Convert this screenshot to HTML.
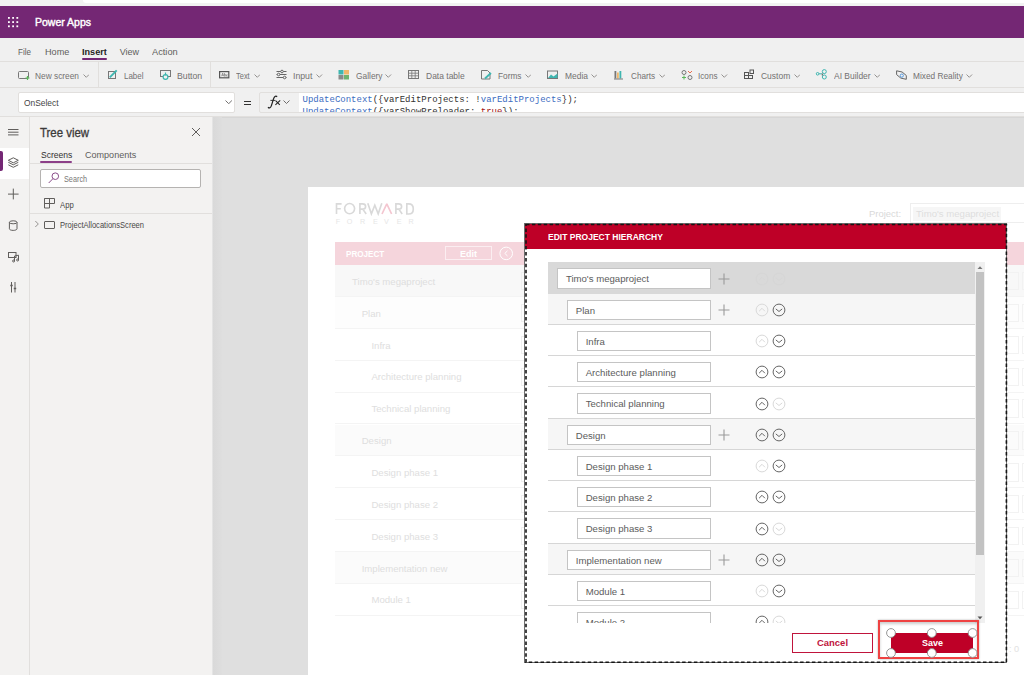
<!DOCTYPE html>
<html><head><meta charset="utf-8">
<style>
*{box-sizing:border-box;margin:0;padding:0}
html,body{width:1024px;height:675px;overflow:hidden;background:#fff;font-family:"Liberation Sans",sans-serif}
.a{position:absolute}
.t{position:absolute;white-space:pre;line-height:normal}

</style></head><body>
<div class=a style="left:0;top:0;width:1024px;height:6.3px;background:#f2f2f2"></div>
<div class=a style="left:83px;top:0;width:941px;height:3.3px;background:#fff;border-radius:0 0 0 3px"></div>
<div class=a style="left:0;top:6px;width:1024px;height:32px;background:#742774"></div>
<svg class=a style="left:8px;top:16.5px" width="11" height="11" viewBox="0 0 11 11" fill="#fff"><rect x="0" y="0" width="1.8" height="1.8"/><rect x="0" y="4.2" width="1.8" height="1.8"/><rect x="0" y="8.4" width="1.8" height="1.8"/><rect x="4.2" y="0" width="1.8" height="1.8"/><rect x="4.2" y="4.2" width="1.8" height="1.8"/><rect x="4.2" y="8.4" width="1.8" height="1.8"/><rect x="8.4" y="0" width="1.8" height="1.8"/><rect x="8.4" y="4.2" width="1.8" height="1.8"/><rect x="8.4" y="8.4" width="1.8" height="1.8"/></svg>
<div class=t style="left:34.5px;top:17.0px;font-size:10.3px;color:#fff;transform:scaleX(1.019);transform-origin:0 0;-webkit-text-stroke:0.4px #fff;">Power Apps</div>
<div class=a style="left:0;top:38px;width:1024px;height:24px;background:#f0f0f0;border-bottom:1px solid #e1dfdd"></div>
<div class=t style="left:18.0px;top:46.7px;font-size:9px;color:#605e5c;transform:scaleX(0.896);transform-origin:0 0;">File</div>
<div class=t style="left:44.5px;top:46.7px;font-size:9px;color:#605e5c;transform:scaleX(1.012);transform-origin:0 0;">Home</div>
<div class=t style="left:119.7px;top:46.7px;font-size:9px;color:#605e5c;">View</div>
<div class=t style="left:152.0px;top:46.7px;font-size:9px;color:#605e5c;transform:scaleX(1.027);transform-origin:0 0;">Action</div>
<div class=t style="left:82.0px;top:46.7px;font-size:9px;color:#252423;font-weight:bold;transform:scaleX(1.012);transform-origin:0 0;">Insert</div>
<div class=a style="left:82px;top:58px;width:25px;height:2px;background:#742774;border-radius:1px"></div>
<div class=a style="left:0;top:62px;width:1024px;height:26px;background:#f0f0f0;border-bottom:1px solid #e1dfdd"></div>
<div class=a style="left:97.5px;top:62px;width:1px;height:25px;background:#e1dfdd"></div>
<div class=a style="left:210px;top:62px;width:1px;height:25px;background:#e1dfdd"></div>
<div class=t style="left:35.4px;top:69.6px;font-size:9.8px;color:#737170;transform:scaleX(0.850);transform-origin:0 0;">New screen</div>
<svg class=a style="left:82.7px;top:74.1px" width="6.6" height="3.8"><polyline points="0.5,0.5 3.3,3.3 6.1,0.5" fill="none" stroke="#8a8886" stroke-width="0.9"/></svg>
<div class=t style="left:123.7px;top:69.6px;font-size:9.8px;color:#737170;transform:scaleX(0.813);transform-origin:0 0;">Label</div>
<div class=t style="left:176.6px;top:69.6px;font-size:9.8px;color:#737170;transform:scaleX(0.890);transform-origin:0 0;">Button</div>
<div class=t style="left:236.3px;top:69.6px;font-size:9.8px;color:#737170;transform:scaleX(0.762);transform-origin:0 0;">Text</div>
<svg class=a style="left:253.7px;top:74.1px" width="6.6" height="3.8"><polyline points="0.5,0.5 3.3,3.3 6.1,0.5" fill="none" stroke="#8a8886" stroke-width="0.9"/></svg>
<div class=t style="left:293.4px;top:69.6px;font-size:9.8px;color:#737170;transform:scaleX(0.890);transform-origin:0 0;">Input</div>
<svg class=a style="left:316.2px;top:74.1px" width="6.6" height="3.8"><polyline points="0.5,0.5 3.3,3.3 6.1,0.5" fill="none" stroke="#8a8886" stroke-width="0.9"/></svg>
<div class=t style="left:355.8px;top:69.6px;font-size:9.8px;color:#737170;transform:scaleX(0.854);transform-origin:0 0;">Gallery</div>
<svg class=a style="left:385.3px;top:74.1px" width="6.6" height="3.8"><polyline points="0.5,0.5 3.3,3.3 6.1,0.5" fill="none" stroke="#8a8886" stroke-width="0.9"/></svg>
<div class=t style="left:425.7px;top:69.6px;font-size:9.8px;color:#737170;transform:scaleX(0.866);transform-origin:0 0;">Data table</div>
<div class=t style="left:497.6px;top:69.6px;font-size:9.8px;color:#737170;transform:scaleX(0.843);transform-origin:0 0;">Forms</div>
<svg class=a style="left:524.7px;top:74.1px" width="6.6" height="3.8"><polyline points="0.5,0.5 3.3,3.3 6.1,0.5" fill="none" stroke="#8a8886" stroke-width="0.9"/></svg>
<div class=t style="left:564.6px;top:69.6px;font-size:9.8px;color:#737170;transform:scaleX(0.862);transform-origin:0 0;">Media</div>
<svg class=a style="left:590.7px;top:74.1px" width="6.6" height="3.8"><polyline points="0.5,0.5 3.3,3.3 6.1,0.5" fill="none" stroke="#8a8886" stroke-width="0.9"/></svg>
<div class=t style="left:631.0px;top:69.6px;font-size:9.8px;color:#737170;transform:scaleX(0.832);transform-origin:0 0;">Charts</div>
<svg class=a style="left:658.9px;top:74.1px" width="6.6" height="3.8"><polyline points="0.5,0.5 3.3,3.3 6.1,0.5" fill="none" stroke="#8a8886" stroke-width="0.9"/></svg>
<div class=t style="left:698.4px;top:69.6px;font-size:9.8px;color:#737170;transform:scaleX(0.833);transform-origin:0 0;">Icons</div>
<svg class=a style="left:721.0px;top:74.1px" width="6.6" height="3.8"><polyline points="0.5,0.5 3.3,3.3 6.1,0.5" fill="none" stroke="#8a8886" stroke-width="0.9"/></svg>
<div class=t style="left:761.0px;top:69.6px;font-size:9.8px;color:#737170;transform:scaleX(0.865);transform-origin:0 0;">Custom</div>
<svg class=a style="left:793.5px;top:74.1px" width="6.6" height="3.8"><polyline points="0.5,0.5 3.3,3.3 6.1,0.5" fill="none" stroke="#8a8886" stroke-width="0.9"/></svg>
<div class=t style="left:833.6px;top:69.6px;font-size:9.8px;color:#737170;transform:scaleX(0.861);transform-origin:0 0;">AI Builder</div>
<svg class=a style="left:873.5px;top:74.1px" width="6.6" height="3.8"><polyline points="0.5,0.5 3.3,3.3 6.1,0.5" fill="none" stroke="#8a8886" stroke-width="0.9"/></svg>
<div class=t style="left:913.3px;top:69.6px;font-size:9.8px;color:#737170;transform:scaleX(0.847);transform-origin:0 0;">Mixed Reality</div>
<svg class=a style="left:966.2px;top:74.1px" width="6.6" height="3.8"><polyline points="0.5,0.5 3.3,3.3 6.1,0.5" fill="none" stroke="#8a8886" stroke-width="0.9"/></svg>
<svg class=a style="left:0;top:62px" width="1024" height="26" fill="none" stroke-width="1">
<g transform="translate(0,-62)">
 <rect x="18.5" y="71.5" width="10" height="7" rx="1" stroke="#777"/>
 <path d="M27.5 76v4M25.5 78h4" stroke="#5cb85c" stroke-width="1.2"/>
 <rect x="108.5" y="71.5" width="7" height="7" stroke="#777"/>
 <path d="M109.8 77.4l6.9-7.1" stroke="#3fb6b0" stroke-width="1.9"/>
 <rect x="160.5" y="70.5" width="10" height="6" stroke="#777"/>
 <circle cx="165.5" cy="77" r="2.4" stroke="#3fb6b0" stroke-width="1.2" fill="#f0f0f0"/>
 <path d="M165.5 72.5v3" stroke="#3fb6b0" stroke-width="1.2"/>
 <rect x="219.6" y="71.6" width="9.2" height="6.2" stroke="#555" stroke-width="1.2"/>
 <path d="M221.6 76.2l1-3 1 3M222 75.2h1.2M224.4 73v3.2c1.2 0 1.6-0.3 1.6-0.9s-0.4-0.9-1.6-0.9M227.6 74.8c-0.8-0.3-1.4 0-1.4 0.7s0.6 1 1.4 0.7" stroke="#666" stroke-width="0.6"/>
 <path d="M276.5 71.5h10M276.5 74.5h10M276.5 77.5h10" stroke="#666"/>
 <circle cx="282" cy="71.5" r="1.3" fill="#f0f0f0" stroke="#666"/><circle cx="278.6" cy="74.5" r="1.3" fill="#f0f0f0" stroke="#666"/><circle cx="284.6" cy="77.5" r="1.3" fill="#f0f0f0" stroke="#666"/>
 <rect x="338.5" y="70" width="5" height="4.5" fill="#3fb6b0" stroke="none"/><rect x="344" y="70" width="5" height="4.5" fill="#f2b86b" stroke="none"/>
 <rect x="338.5" y="75" width="5" height="4.5" fill="#8a8a8a" stroke="none"/><rect x="344" y="75" width="5" height="4.5" fill="#6fb36f" stroke="none"/>
 <rect x="408.5" y="70.5" width="10" height="8" stroke="#777"/>
 <path d="M408.5 73.2h10M408.5 75.8h10M411.8 70.5v8M415.2 70.5v8" stroke="#777" stroke-width="0.8"/>
 <path d="M481.5 70.5h6l2.5 2.5v6h-8.5z" stroke="#777"/>
 <path d="M485 78.5l6-5.5" stroke="#3fb6b0" stroke-width="1.8"/>
 <rect x="547.5" y="71" width="10" height="7.5" stroke="#777"/>
 <path d="M548 78l3-3.5 2.5 2 4-3v4.5h-9.5z" fill="#3fb6b0" stroke="none"/>
 <rect x="614.5" y="71" width="1.8" height="7.5" fill="#777" stroke="none"/>
 <rect x="617" y="72.5" width="1.8" height="6" fill="#f2b86b" stroke="none"/>
 <rect x="619.5" y="71" width="1.8" height="7.5" fill="#3fb6b0" stroke="none"/>
 <path d="M614 79h9" stroke="#777"/>
 <circle cx="684" cy="72.5" r="2" stroke="#777"/><path d="M688 71l2 2 2-2" stroke="#e96b4b"/>
 <path d="M682 77.5h4M684 75.5v4" stroke="#5cb85c"/><circle cx="690" cy="77.5" r="2" stroke="#777"/>
 <rect x="744.5" y="72.5" width="4" height="3" stroke="#555"/><rect x="744.5" y="75.5" width="4" height="3" stroke="#555"/><rect x="748.5" y="75.5" width="4" height="3" stroke="#555"/>
 <rect x="750" y="70" width="3.5" height="3.5" stroke="#555"/>
 <path d="M818.4 73.8h3.5" stroke="#3fb6b0"/>
 <circle cx="817.6" cy="73.8" r="1.3" stroke="#3fb6b0" fill="#f0f0f0"/><circle cx="824.3" cy="71.6" r="2" stroke="#3fb6b0" fill="#f0f0f0"/><circle cx="824.3" cy="77" r="2" stroke="#3fb6b0" fill="#f0f0f0"/><path d="M822.3 73.5v2" stroke="#555"/>
 <path d="M896.6 70.8l5.5 1.2 4.2 3.5v3.8l-5.5-1.2-4.2-3.5z" stroke="#666"/><circle cx="901.8" cy="75.6" r="1.6" stroke="#4a90d9" stroke-width="0.9"/>
</g></svg>
<div class=a style="left:0;top:88px;width:1024px;height:29px;background:#f0f0f0;border-bottom:1px solid #e1dfdd"></div>
<div class=a style="left:18px;top:92px;width:216.5px;height:20.5px;background:#fff;border:1px solid #e1dfdd;border-radius:2px"></div>
<div class=t style="left:23.5px;top:97.7px;font-size:9px;color:#454545;transform:scaleX(0.932);transform-origin:0 0;">OnSelect</div>
<svg class=a style="left:224.9px;top:100.2px" width="7.4" height="4.2"><polyline points="0.5,0.5 3.7,3.7 6.9,0.5" fill="none" stroke="#605e5c" stroke-width="0.9"/></svg>
<div class=a style="left:244px;top:100.5px;width:7px;height:1.3px;background:#323130"></div>
<div class=a style="left:244px;top:103.8px;width:7px;height:1.3px;background:#323130"></div>
<div class=a style="left:259px;top:92px;width:40.5px;height:20.5px;background:#f0f0f0;border:1px solid #e1dfdd;border-radius:2px 0 0 2px"></div>
<svg class=a style="left:0;top:0" width="1024" height="130" fill="none" stroke="#222"><path d="M268 107.2C269.3 108.6 270.7 107.8 271.4 105.6L273.6 98.6C274.3 96.6 275.4 95.6 277.2 96.6" stroke-width="1.25"/><path d="M270.4 100.4H275.3" stroke-width="0.9"/><path d="M275.6 100.6L279.8 104.8M280.2 100.4L275.4 104.9" stroke-width="1.05"/></svg>
<svg class=a style="left:283.0px;top:100.3px" width="7.0" height="4.0"><polyline points="0.5,0.5 3.5,3.5 6.5,0.5" fill="none" stroke="#605e5c" stroke-width="0.9"/></svg>
<div class=a style="left:299px;top:92px;width:725px;height:20.5px;background:#fff;border-top:1px solid #e1dfdd;border-bottom:1px solid #e1dfdd;overflow:hidden"><div style="position:absolute;left:3.5px;top:1.2px;font-family:'Liberation Mono';font-size:9px;line-height:12.2px;white-space:pre;color:#323130"><span style="color:#3b6cc1">UpdateContext</span>({varEditProjects: !<span style="color:#3b6cc1">varEditProjects</span>});
<span style="color:#3b6cc1">UpdateContext</span>({varShowPreloader: <span style="color:#a31515">true</span>});</div></div>
<div class=a style="left:0;top:117px;width:30px;height:558px;background:#f3f2f1;border-right:1px solid #e1dfdd"></div>
<div class=a style="left:0;top:148px;width:29px;height:30.5px;background:#fff"></div>
<div class=a style="left:0;top:150.5px;width:2.7px;height:20.3px;background:#742774;border-radius:0 2px 2px 0"></div>
<svg class=a style="left:0;top:117px" width="30" height="200" fill="none" stroke="#605e5c" stroke-width="1">
<g transform="translate(0,-117)">
<path d="M8 129.5h10.5M8 132.2h10.5M8 134.9h10.5"/>
<path d="M13.3 157.8l5 2.5-5 2.5-5-2.5z"/><path d="M8.3 162.3l5 2.5 5-2.5M8.3 164.8l5 2.5 5-2.5"/>
<path d="M13.3 188.6v10.8M8 194.1h10.6" stroke-width="1"/>
<ellipse cx="13.2" cy="222.3" rx="3.8" ry="1.5"/><path d="M9.4 222.3v6.5c0 0.9 1.7 1.6 3.8 1.6s3.8-0.7 3.8-1.6v-6.5"/>
<rect x="8.5" y="252.5" width="7.5" height="5"/><path d="M14.5 261v-5l4 -0.8v4.8"/><circle cx="13.6" cy="261" r="1"/><circle cx="17.6" cy="260" r="1"/>
<path d="M11.5 282v10.5M15 282v10.5"/><path d="M10.3 285.5h2.4M13.8 288.5h2.4" stroke-width="1.4"/>
</g></svg>
<div class=a style="left:30px;top:117px;width:182px;height:558px;background:#f3f2f1"></div>
<div class=t style="left:40.3px;top:125.7px;font-size:12px;color:#3b3a39;transform:scaleX(0.950);transform-origin:0 0;-webkit-text-stroke:0.3px #3b3a39;">Tree view</div>
<svg class=a style="left:191px;top:126.5px" width="10" height="10"><path d="M1 1l8 8M9 1l-8 8" stroke="#605e5c" stroke-width="1"/></svg>
<div class=t style="left:40.5px;top:149.1px;font-size:9.8px;color:#323130;transform:scaleX(0.871);transform-origin:0 0;">Screens</div>
<div class=t style="left:84.5px;top:149.1px;font-size:9.8px;color:#605e5c;transform:scaleX(0.923);transform-origin:0 0;">Components</div>
<div class=a style="left:30px;top:163px;width:182px;height:1px;background:#e1dfdd"></div>
<div class=a style="left:40px;top:161px;width:32.3px;height:2px;background:#8c3f88;border-radius:1px"></div>
<div class=a style="left:39.7px;top:168.5px;width:161.6px;height:19px;background:#fff;border:1px solid #b5b3b1;border-radius:2px"></div>
<svg class=a style="left:47px;top:171px" width="14" height="14" fill="none" stroke="#8a4d8a" stroke-width="1"><circle cx="8.3" cy="5.2" r="3.3"/><path d="M6 7.6l-4.3 4.4"/></svg>
<div class=t style="left:64.0px;top:174.3px;font-size:8.5px;color:#7a7876;transform:scaleX(0.858);transform-origin:0 0;">Search</div>
<svg class=a style="left:43px;top:197px" width="14" height="13" fill="none" stroke="#605e5c" stroke-width="1">
<path d="M1.5 1.5h10v5h-10zM1.5 1.5v9.5h5v-9.5"/></svg>
<div class=t style="left:59.9px;top:199.7px;font-size:8.3px;color:#484746;transform:scaleX(0.928);transform-origin:0 0;">App</div>
<div class=a style="left:30px;top:213px;width:182px;height:1px;background:#e1dfdd"></div>
<svg class=a style="left:34px;top:220px" width="6" height="8"><path d="M1.3 1l3 3-3 3" fill="none" stroke="#8a8886" stroke-width="0.9"/></svg>
<div class=a style="left:44px;top:220.7px;width:11px;height:8px;border:1px solid #605e5c;border-radius:1px"></div>
<div class=t style="left:59.9px;top:221.1px;font-size:8.2px;color:#484746;transform:scaleX(0.923);transform-origin:0 0;">ProjectAllocationsScreen</div>
<div class=a style="left:212px;top:117px;width:812px;height:558px;background:#dfdfdf;border-top:1px solid #d6d6d6"></div>
<div class=a style="left:212px;top:117px;width:10px;height:558px;background:linear-gradient(90deg,#e4e4e4 0,#e4e4e4 1px,#d9d9d9 1px,#dedede)"></div>
<div class=a style="left:308px;top:187px;width:716px;height:488px;background:#fff"></div>
<svg class=a style="left:0;top:0" width="1024" height="675" fill="none" stroke="#d9d9d9" stroke-width="1.65"><path d="M336.5 214V203.8H341.6M336.5 208.7H340.8"/><ellipse cx="349.6" cy="208.6" rx="5" ry="5.1"/><path d="M359.9 214V203.8H362.6C364.6 203.8 365.6 205 365.6 206.4C365.6 207.9 364.5 209.1 362.6 209.1H359.9M362.8 209.1L366.2 214"/><path d="M367.8 203.3L371.4 213.8L374.8 205.2L378.2 213.8L381.8 203.3"/><path d="M395.9 214V203.8H398.6C400.6 203.8 401.6 205 401.6 206.4C401.6 207.9 400.5 209.1 398.6 209.1H395.9M398.8 209.1L402.2 214"/><path d="M406.8 214V203.8H408.6C411.6 203.8 413.3 206 413.3 208.9C413.3 211.8 411.6 214 408.6 214Z"/><path d="M382 214L386.8 203.9L391.6 214" stroke="#f4c6d0" stroke-width="1.7" stroke-linejoin="bevel"/></svg>
<div class=t style="left:335.7px;top:217.3px;font-size:7.2px;color:#e6e6e6;">F</div>
<div class=t style="left:346.8px;top:217.3px;font-size:7.2px;color:#e6e6e6;">O</div>
<div class=t style="left:360.0px;top:217.3px;font-size:7.2px;color:#e6e6e6;">R</div>
<div class=t style="left:373.0px;top:217.3px;font-size:7.2px;color:#e6e6e6;">E</div>
<div class=t style="left:384.0px;top:217.3px;font-size:7.2px;color:#e6e6e6;">V</div>
<div class=t style="left:396.8px;top:217.3px;font-size:7.2px;color:#e6e6e6;">E</div>
<div class=t style="left:408.6px;top:217.3px;font-size:7.2px;color:#e6e6e6;">R</div>
<div class=t style="left:868.8px;top:207.6px;font-size:9.6px;color:#d9d9d9;transform:scaleX(0.984);transform-origin:0 0;">Project:</div>
<div class=a style="left:910px;top:203.2px;width:120px;height:19.6px;border:1px solid #eeeeee"></div>
<div class=a style="left:913px;top:207px;width:88px;height:13.5px;background:#f6f6f6"></div>
<div class=t style="left:916.0px;top:207.8px;font-size:9.6px;color:#dedede;">Timo&#x27;s megaproject</div>
<div class=a style="left:334.8px;top:265.2px;width:700px;height:31.86px;background:#f8f8f8;border-bottom:1px solid #f4f4f4"></div>
<div class=t style="left:352.1px;top:275.8px;font-size:9.6px;color:#dedede;">Timo&#x27;s megaproject</div>
<div class=a style="left:520.7px;top:271.9px;width:30px;height:18.5px;border:1px solid #f0f0f0"></div>
<div class=a style="left:1007px;top:271.9px;width:11.5px;height:18.5px;border:1px solid #f2f2f2"></div>
<div class=a style="left:1022px;top:271.9px;width:11.5px;height:18.5px;border:1px solid #f2f2f2"></div>
<div class=a style="left:334.8px;top:297.1px;width:700px;height:31.86px;background:#fdfdfd;border-bottom:1px solid #f4f4f4"></div>
<div class=t style="left:361.7px;top:307.7px;font-size:9.6px;color:#dedede;">Plan</div>
<div class=a style="left:520.7px;top:303.8px;width:30px;height:18.5px;border:1px solid #f0f0f0"></div>
<div class=a style="left:1007px;top:303.8px;width:11.5px;height:18.5px;border:1px solid #f2f2f2"></div>
<div class=a style="left:1022px;top:303.8px;width:11.5px;height:18.5px;border:1px solid #f2f2f2"></div>
<div class=a style="left:334.8px;top:328.9px;width:700px;height:31.86px;background:#fff;border-bottom:1px solid #f4f4f4"></div>
<div class=t style="left:371.4px;top:339.5px;font-size:9.6px;color:#dedede;">Infra</div>
<div class=a style="left:520.7px;top:335.6px;width:30px;height:18.5px;border:1px solid #f0f0f0"></div>
<div class=a style="left:1007px;top:335.6px;width:11.5px;height:18.5px;border:1px solid #f2f2f2"></div>
<div class=a style="left:1022px;top:335.6px;width:11.5px;height:18.5px;border:1px solid #f2f2f2"></div>
<div class=a style="left:334.8px;top:360.8px;width:700px;height:31.86px;background:#fff;border-bottom:1px solid #f4f4f4"></div>
<div class=t style="left:371.4px;top:371.4px;font-size:9.6px;color:#dedede;">Architecture planning</div>
<div class=a style="left:520.7px;top:367.5px;width:30px;height:18.5px;border:1px solid #f0f0f0"></div>
<div class=a style="left:1007px;top:367.5px;width:11.5px;height:18.5px;border:1px solid #f2f2f2"></div>
<div class=a style="left:1022px;top:367.5px;width:11.5px;height:18.5px;border:1px solid #f2f2f2"></div>
<div class=a style="left:334.8px;top:392.6px;width:700px;height:31.86px;background:#fff;border-bottom:1px solid #f4f4f4"></div>
<div class=t style="left:371.4px;top:403.3px;font-size:9.6px;color:#dedede;">Technical planning</div>
<div class=a style="left:520.7px;top:399.3px;width:30px;height:18.5px;border:1px solid #f0f0f0"></div>
<div class=a style="left:1007px;top:399.3px;width:11.5px;height:18.5px;border:1px solid #f2f2f2"></div>
<div class=a style="left:1022px;top:399.3px;width:11.5px;height:18.5px;border:1px solid #f2f2f2"></div>
<div class=a style="left:334.8px;top:424.5px;width:700px;height:31.86px;background:#fbfbfb;border-bottom:1px solid #f4f4f4"></div>
<div class=t style="left:361.7px;top:435.1px;font-size:9.6px;color:#dedede;">Design</div>
<div class=a style="left:520.7px;top:431.2px;width:30px;height:18.5px;border:1px solid #f0f0f0"></div>
<div class=a style="left:1007px;top:431.2px;width:11.5px;height:18.5px;border:1px solid #f2f2f2"></div>
<div class=a style="left:1022px;top:431.2px;width:11.5px;height:18.5px;border:1px solid #f2f2f2"></div>
<div class=a style="left:334.8px;top:456.4px;width:700px;height:31.86px;background:#fff;border-bottom:1px solid #f4f4f4"></div>
<div class=t style="left:371.4px;top:467.0px;font-size:9.6px;color:#dedede;">Design phase 1</div>
<div class=a style="left:520.7px;top:463.1px;width:30px;height:18.5px;border:1px solid #f0f0f0"></div>
<div class=a style="left:1007px;top:463.1px;width:11.5px;height:18.5px;border:1px solid #f2f2f2"></div>
<div class=a style="left:1022px;top:463.1px;width:11.5px;height:18.5px;border:1px solid #f2f2f2"></div>
<div class=a style="left:334.8px;top:488.2px;width:700px;height:31.86px;background:#fff;border-bottom:1px solid #f4f4f4"></div>
<div class=t style="left:371.4px;top:498.8px;font-size:9.6px;color:#dedede;">Design phase 2</div>
<div class=a style="left:520.7px;top:494.9px;width:30px;height:18.5px;border:1px solid #f0f0f0"></div>
<div class=a style="left:1007px;top:494.9px;width:11.5px;height:18.5px;border:1px solid #f2f2f2"></div>
<div class=a style="left:1022px;top:494.9px;width:11.5px;height:18.5px;border:1px solid #f2f2f2"></div>
<div class=a style="left:334.8px;top:520.1px;width:700px;height:31.86px;background:#fff;border-bottom:1px solid #f4f4f4"></div>
<div class=t style="left:371.4px;top:530.7px;font-size:9.6px;color:#dedede;">Design phase 3</div>
<div class=a style="left:520.7px;top:526.8px;width:30px;height:18.5px;border:1px solid #f0f0f0"></div>
<div class=a style="left:1007px;top:526.8px;width:11.5px;height:18.5px;border:1px solid #f2f2f2"></div>
<div class=a style="left:1022px;top:526.8px;width:11.5px;height:18.5px;border:1px solid #f2f2f2"></div>
<div class=a style="left:334.8px;top:551.9px;width:700px;height:31.86px;background:#fbfbfb;border-bottom:1px solid #f4f4f4"></div>
<div class=t style="left:361.7px;top:562.6px;font-size:9.6px;color:#dedede;">Implementation new</div>
<div class=a style="left:520.7px;top:558.6px;width:30px;height:18.5px;border:1px solid #f0f0f0"></div>
<div class=a style="left:1007px;top:558.6px;width:11.5px;height:18.5px;border:1px solid #f2f2f2"></div>
<div class=a style="left:1022px;top:558.6px;width:11.5px;height:18.5px;border:1px solid #f2f2f2"></div>
<div class=a style="left:334.8px;top:583.8px;width:700px;height:31.86px;background:#fff;border-bottom:1px solid #f4f4f4"></div>
<div class=t style="left:371.4px;top:594.4px;font-size:9.6px;color:#dedede;">Module 1</div>
<div class=a style="left:520.7px;top:590.5px;width:30px;height:18.5px;border:1px solid #f0f0f0"></div>
<div class=a style="left:1007px;top:590.5px;width:11.5px;height:18.5px;border:1px solid #f2f2f2"></div>
<div class=a style="left:1022px;top:590.5px;width:11.5px;height:18.5px;border:1px solid #f2f2f2"></div>
<div class=a style="left:334.8px;top:242px;width:700px;height:23.3px;background:#f5d5dc"></div>
<div class=t style="left:346.1px;top:248.3px;font-size:9.8px;color:#fff;font-weight:bold;transform:scaleX(0.828);transform-origin:0 0;">PROJECT</div>
<div class=a style="left:444.9px;top:246.3px;width:46.8px;height:14.1px;border:1px solid #fbeef1"></div>
<div class=t style="left:460.2px;top:248.1px;font-size:9.8px;color:#fff;font-weight:bold;transform:scaleX(0.918);transform-origin:0 0;">Edit</div>
<svg class=a style="left:498px;top:245px" width="17" height="17" fill="none" stroke="#fff" stroke-width="1"><circle cx="8.2" cy="8.4" r="6.3"/><path d="M9.5 5.8l-2.6 2.6 2.6 2.6"/></svg>
<div class=t style="left:1009.0px;top:643.7px;font-size:9.2px;color:#e2e2e2;">: 0</div>
<div class=a style="left:525px;top:223px;width:482px;height:440px;background:#fff"></div>
<div class=a style="left:525px;top:223px;width:482px;height:25.5px;background:#be0027"></div>
<div class=t style="left:547.8px;top:232.1px;font-size:9px;color:#fff;font-weight:bold;transform:scaleX(0.946);transform-origin:0 0;">EDIT PROJECT HIERARCHY</div>
<div class=a style="left:548px;top:262.4px;width:427px;height:360.6px;overflow:hidden"><div class=a style="left:0;top:0.0px;width:427px;height:31.6px;background:#d9d9d9;"></div><div class=a style="left:9.3px;top:6.1px;width:153.9px;height:20.3px;background:#fff;border:1px solid #c4c4c4"></div><div class=t style="left:17.9px;top:11.0px;font-size:9.6px;color:#5c5c5c">Timo&#x27;s megaproject</div><svg class=a style="left:170px;top:10.6px" width="12" height="12"><path d="M6 0.5v11M0.5 6h11" stroke="#9a9a9a" stroke-width="1.1"/></svg><svg class=a style="left:205.8px;top:8.2px" width="16" height="16" fill="none" stroke="#d6d6d6" stroke-width="1"><g transform="translate(8,8)"><circle r="5.9"/><path d="M-2.9 1.2L0 -1.7L2.9 1.2"/></g></svg><svg class=a style="left:222.8px;top:8.2px" width="16" height="16" fill="none" stroke="#d6d6d6" stroke-width="1"><g transform="translate(8,8)"><circle r="5.9"/><path d="M-3.2 -1.1L0 1.5L3.2 -1.1"/></g></svg><div class=a style="left:0;top:31.2px;width:427px;height:31.2px;background:#f6f6f6;border-bottom:1px solid #d6d6d6;"></div><div class=a style="left:19.2px;top:37.4px;width:144.0px;height:20.3px;background:#fff;border:1px solid #c4c4c4"></div><div class=t style="left:27.8px;top:42.3px;font-size:9.6px;color:#5c5c5c">Plan</div><svg class=a style="left:170px;top:41.9px" width="12" height="12"><path d="M6 0.5v11M0.5 6h11" stroke="#9a9a9a" stroke-width="1.1"/></svg><svg class=a style="left:205.8px;top:39.5px" width="16" height="16" fill="none" stroke="#d9d9d9" stroke-width="1"><g transform="translate(8,8)"><circle r="5.9"/><path d="M-2.9 1.2L0 -1.7L2.9 1.2"/></g></svg><svg class=a style="left:222.8px;top:39.5px" width="16" height="16" fill="none" stroke="#666" stroke-width="1"><g transform="translate(8,8)"><circle r="5.9"/><path d="M-3.2 -1.1L0 1.5L3.2 -1.1"/></g></svg><div class=a style="left:0;top:62.5px;width:427px;height:31.2px;background:#fff;border-bottom:1px solid #d6d6d6;"></div><div class=a style="left:29.1px;top:68.6px;width:134.1px;height:20.3px;background:#fff;border:1px solid #c4c4c4"></div><div class=t style="left:37.7px;top:73.5px;font-size:9.6px;color:#5c5c5c">Infra</div><svg class=a style="left:205.8px;top:70.7px" width="16" height="16" fill="none" stroke="#d9d9d9" stroke-width="1"><g transform="translate(8,8)"><circle r="5.9"/><path d="M-2.9 1.2L0 -1.7L2.9 1.2"/></g></svg><svg class=a style="left:222.8px;top:70.7px" width="16" height="16" fill="none" stroke="#666" stroke-width="1"><g transform="translate(8,8)"><circle r="5.9"/><path d="M-3.2 -1.1L0 1.5L3.2 -1.1"/></g></svg><div class=a style="left:0;top:93.8px;width:427px;height:31.2px;background:#fff;border-bottom:1px solid #d6d6d6;"></div><div class=a style="left:29.1px;top:99.8px;width:134.1px;height:20.3px;background:#fff;border:1px solid #c4c4c4"></div><div class=t style="left:37.7px;top:104.8px;font-size:9.6px;color:#5c5c5c">Architecture planning</div><svg class=a style="left:205.8px;top:102.0px" width="16" height="16" fill="none" stroke="#666" stroke-width="1"><g transform="translate(8,8)"><circle r="5.9"/><path d="M-2.9 1.2L0 -1.7L2.9 1.2"/></g></svg><svg class=a style="left:222.8px;top:102.0px" width="16" height="16" fill="none" stroke="#666" stroke-width="1"><g transform="translate(8,8)"><circle r="5.9"/><path d="M-3.2 -1.1L0 1.5L3.2 -1.1"/></g></svg><div class=a style="left:0;top:125.0px;width:427px;height:31.2px;background:#fff;border-bottom:1px solid #d6d6d6;"></div><div class=a style="left:29.1px;top:131.1px;width:134.1px;height:20.3px;background:#fff;border:1px solid #c4c4c4"></div><div class=t style="left:37.7px;top:136.0px;font-size:9.6px;color:#5c5c5c">Technical planning</div><svg class=a style="left:205.8px;top:133.2px" width="16" height="16" fill="none" stroke="#666" stroke-width="1"><g transform="translate(8,8)"><circle r="5.9"/><path d="M-2.9 1.2L0 -1.7L2.9 1.2"/></g></svg><svg class=a style="left:222.8px;top:133.2px" width="16" height="16" fill="none" stroke="#d9d9d9" stroke-width="1"><g transform="translate(8,8)"><circle r="5.9"/><path d="M-3.2 -1.1L0 1.5L3.2 -1.1"/></g></svg><div class=a style="left:0;top:156.2px;width:427px;height:31.2px;background:#f6f6f6;border-bottom:1px solid #d6d6d6;"></div><div class=a style="left:19.2px;top:162.3px;width:144.0px;height:20.3px;background:#fff;border:1px solid #c4c4c4"></div><div class=t style="left:27.8px;top:167.3px;font-size:9.6px;color:#5c5c5c">Design</div><svg class=a style="left:170px;top:166.8px" width="12" height="12"><path d="M6 0.5v11M0.5 6h11" stroke="#9a9a9a" stroke-width="1.1"/></svg><svg class=a style="left:205.8px;top:164.4px" width="16" height="16" fill="none" stroke="#666" stroke-width="1"><g transform="translate(8,8)"><circle r="5.9"/><path d="M-2.9 1.2L0 -1.7L2.9 1.2"/></g></svg><svg class=a style="left:222.8px;top:164.4px" width="16" height="16" fill="none" stroke="#666" stroke-width="1"><g transform="translate(8,8)"><circle r="5.9"/><path d="M-3.2 -1.1L0 1.5L3.2 -1.1"/></g></svg><div class=a style="left:0;top:187.5px;width:427px;height:31.2px;background:#fff;border-bottom:1px solid #d6d6d6;"></div><div class=a style="left:29.1px;top:193.6px;width:134.1px;height:20.3px;background:#fff;border:1px solid #c4c4c4"></div><div class=t style="left:37.7px;top:198.5px;font-size:9.6px;color:#5c5c5c">Design phase 1</div><svg class=a style="left:205.8px;top:195.7px" width="16" height="16" fill="none" stroke="#d9d9d9" stroke-width="1"><g transform="translate(8,8)"><circle r="5.9"/><path d="M-2.9 1.2L0 -1.7L2.9 1.2"/></g></svg><svg class=a style="left:222.8px;top:195.7px" width="16" height="16" fill="none" stroke="#666" stroke-width="1"><g transform="translate(8,8)"><circle r="5.9"/><path d="M-3.2 -1.1L0 1.5L3.2 -1.1"/></g></svg><div class=a style="left:0;top:218.8px;width:427px;height:31.2px;background:#fff;border-bottom:1px solid #d6d6d6;"></div><div class=a style="left:29.1px;top:224.8px;width:134.1px;height:20.3px;background:#fff;border:1px solid #c4c4c4"></div><div class=t style="left:37.7px;top:229.8px;font-size:9.6px;color:#5c5c5c">Design phase 2</div><svg class=a style="left:205.8px;top:226.9px" width="16" height="16" fill="none" stroke="#666" stroke-width="1"><g transform="translate(8,8)"><circle r="5.9"/><path d="M-2.9 1.2L0 -1.7L2.9 1.2"/></g></svg><svg class=a style="left:222.8px;top:226.9px" width="16" height="16" fill="none" stroke="#666" stroke-width="1"><g transform="translate(8,8)"><circle r="5.9"/><path d="M-3.2 -1.1L0 1.5L3.2 -1.1"/></g></svg><div class=a style="left:0;top:250.0px;width:427px;height:31.2px;background:#fff;border-bottom:1px solid #d6d6d6;"></div><div class=a style="left:29.1px;top:256.1px;width:134.1px;height:20.3px;background:#fff;border:1px solid #c4c4c4"></div><div class=t style="left:37.7px;top:261.0px;font-size:9.6px;color:#5c5c5c">Design phase 3</div><svg class=a style="left:205.8px;top:258.2px" width="16" height="16" fill="none" stroke="#666" stroke-width="1"><g transform="translate(8,8)"><circle r="5.9"/><path d="M-2.9 1.2L0 -1.7L2.9 1.2"/></g></svg><svg class=a style="left:222.8px;top:258.2px" width="16" height="16" fill="none" stroke="#d9d9d9" stroke-width="1"><g transform="translate(8,8)"><circle r="5.9"/><path d="M-3.2 -1.1L0 1.5L3.2 -1.1"/></g></svg><div class=a style="left:0;top:281.2px;width:427px;height:31.2px;background:#f6f6f6;border-bottom:1px solid #d6d6d6;"></div><div class=a style="left:19.2px;top:287.4px;width:144.0px;height:20.3px;background:#fff;border:1px solid #c4c4c4"></div><div class=t style="left:27.8px;top:292.3px;font-size:9.6px;color:#5c5c5c">Implementation new</div><svg class=a style="left:170px;top:291.9px" width="12" height="12"><path d="M6 0.5v11M0.5 6h11" stroke="#9a9a9a" stroke-width="1.1"/></svg><svg class=a style="left:205.8px;top:289.4px" width="16" height="16" fill="none" stroke="#666" stroke-width="1"><g transform="translate(8,8)"><circle r="5.9"/><path d="M-2.9 1.2L0 -1.7L2.9 1.2"/></g></svg><svg class=a style="left:222.8px;top:289.4px" width="16" height="16" fill="none" stroke="#666" stroke-width="1"><g transform="translate(8,8)"><circle r="5.9"/><path d="M-3.2 -1.1L0 1.5L3.2 -1.1"/></g></svg><div class=a style="left:0;top:312.5px;width:427px;height:31.2px;background:#fff;border-bottom:1px solid #d6d6d6;"></div><div class=a style="left:29.1px;top:318.6px;width:134.1px;height:20.3px;background:#fff;border:1px solid #c4c4c4"></div><div class=t style="left:37.7px;top:323.5px;font-size:9.6px;color:#5c5c5c">Module 1</div><svg class=a style="left:205.8px;top:320.7px" width="16" height="16" fill="none" stroke="#d9d9d9" stroke-width="1"><g transform="translate(8,8)"><circle r="5.9"/><path d="M-2.9 1.2L0 -1.7L2.9 1.2"/></g></svg><svg class=a style="left:222.8px;top:320.7px" width="16" height="16" fill="none" stroke="#666" stroke-width="1"><g transform="translate(8,8)"><circle r="5.9"/><path d="M-3.2 -1.1L0 1.5L3.2 -1.1"/></g></svg><div class=a style="left:0;top:343.8px;width:427px;height:31.2px;background:#fff;border-bottom:1px solid #d6d6d6;"></div><div class=a style="left:29.1px;top:349.9px;width:134.1px;height:20.3px;background:#fff;border:1px solid #c4c4c4"></div><div class=t style="left:37.7px;top:354.8px;font-size:9.6px;color:#5c5c5c">Module 2</div><svg class=a style="left:205.8px;top:351.9px" width="16" height="16" fill="none" stroke="#666" stroke-width="1"><g transform="translate(8,8)"><circle r="5.9"/><path d="M-2.9 1.2L0 -1.7L2.9 1.2"/></g></svg><svg class=a style="left:222.8px;top:351.9px" width="16" height="16" fill="none" stroke="#d9d9d9" stroke-width="1"><g transform="translate(8,8)"><circle r="5.9"/><path d="M-3.2 -1.1L0 1.5L3.2 -1.1"/></g></svg></div>
<div class=a style="left:975px;top:262.4px;width:10px;height:360.6px;background:#f0f0f0"></div>
<div class=a style="left:976px;top:272.1px;width:8px;height:282.5px;background:#c2c2c2"></div>
<svg class=a style="left:976px;top:264px" width="8" height="6"><path d="M1.5 5L4 2.2L6.5 5z" fill="#777"/></svg>
<svg class=a style="left:976px;top:615px" width="8" height="6"><path d="M1.5 1.5L4 4.3L6.5 1.5z" fill="#555"/></svg>
<div class=a style="left:791.9px;top:632.6px;width:80.8px;height:20.1px;border:1.3px solid #c0143c;background:#fff"></div>
<div class=t style="left:816.5px;top:637.4px;font-size:9.8px;color:#c0143c;font-weight:bold;transform:scaleX(0.965);transform-origin:0 0;">Cancel</div>
<div class=a style="left:890.7px;top:632.6px;width:82.1px;height:20.4px;background:#be0027"></div>
<div class=t style="left:921.8px;top:637.4px;font-size:9.8px;color:#fff;font-weight:bold;transform:scaleX(0.917);transform-origin:0 0;">Save</div>
<div class=a style="left:878.2px;top:620px;width:100.8px;height:39px;border:2px solid #ef4242;box-shadow:0 0 2px rgba(0,0,0,0.3),inset 0 2px 3px rgba(0,0,0,0.2)"></div>
<svg class=a style="left:0;top:0" width="1024" height="675" fill="#fff" stroke="#8a8a8a" stroke-width="0.9"><circle cx="891" cy="633" r="4.4"/><circle cx="891" cy="653" r="4.4"/><circle cx="931.8" cy="633" r="4.4"/><circle cx="931.8" cy="653" r="4.4"/><circle cx="972.6" cy="633" r="4.4"/><circle cx="972.6" cy="653" r="4.4"/></svg>
<svg class=a style="left:0;top:0" width="1024" height="675" fill="none"><rect x="524.5" y="223.5" width="482" height="439" stroke="#6e6e6e" stroke-width="1"/><rect x="526" y="224.5" width="480.4" height="437.8" stroke="#151515" stroke-width="1.6" stroke-dasharray="3.5 2.4"/></svg>
</body></html>
